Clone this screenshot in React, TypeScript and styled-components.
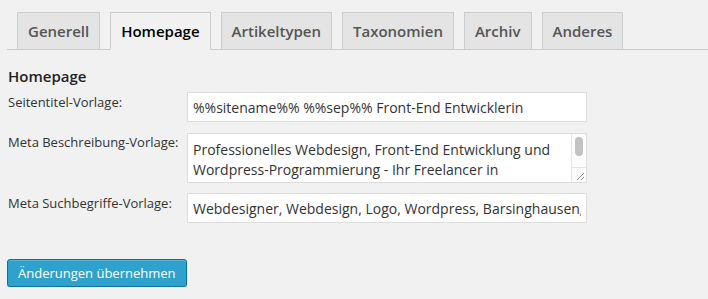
import styled, {createGlobalStyle} from "styled-components";

const GlobalStyle = createGlobalStyle`
    body {
        margin: 0;
        background: #f1f1f1;
        font-family: "Open Sans", "Liberation Sans", sans-serif;
        color: #444;
    }
`

const tabs = ["Generell", "Homepage", "Artikeltypen", "Taxonomien", "Archiv", "Anderes"]

const description = "Professionelles Webdesign, Front-End Entwicklung und Wordpress-Programmierung - Ihr Freelancer in Barsinghausen bei Hannover. Individuelle Webseiten, Logos und Wordpress-Themes."

export default function App() {
    return (
        <>
            <GlobalStyle/>
            <Page>
                <TabBar>
                    {tabs.map((t) => <Tab key={t} $active={t === "Homepage"}>{t}</Tab>)}
                </TabBar>
                <Heading>Homepage</Heading>
                <FormGrid>
                    <Label>Seitentitel-Vorlage:</Label>
                    <Input defaultValue="%%sitename%% %%sep%% Front-End Entwicklerin" spellCheck={false}/>
                    <Label>Meta Beschreibung-Vorlage:</Label>
                    <TextAreaWrap>
                        <TextArea defaultValue={description} spellCheck={false}/>
                        <ScrollTrack>
                            <ScrollThumb/>
                            <ResizeCorner>
                                <svg width="15" height="15" viewBox="0 0 15 15">
                                    <path d="M13 6 L6 13 M13 10 L10 13" stroke="#888" strokeWidth="1"/>
                                </svg>
                            </ResizeCorner>
                        </ScrollTrack>
                    </TextAreaWrap>
                    <Label>Meta Suchbegriffe-Vorlage:</Label>
                    <Input
                        defaultValue="Webdesigner, Webdesign, Logo, Wordpress, Barsinghausen, Hannover"
                        spellCheck={false}
                    />
                </FormGrid>
                <SubmitButton>Änderungen übernehmen</SubmitButton>
            </Page>
        </>
    )
}

const Page = styled.div`
    padding-top: 12px;
`

const TabBar = styled.div`
    display: flex;
    gap: 10px;
    margin-left: 7px;
    padding-left: 10px;
    border-bottom: 1px solid #ccc;
`

const Tab = styled.div<{ $active?: boolean }>`
    padding: 6px 10px;
    margin-bottom: -1px;
    border: 1px solid #ccc;
    border-bottom: 1px solid ${({$active}) => $active ? "#f1f1f1" : "#ccc"};
    background: ${({$active}) => $active ? "#f1f1f1" : "#e4e4e4"};
    color: ${({$active}) => $active ? "#000" : "#555"};
    font-size: 15px;
    font-weight: 600;
    line-height: 24px;
`

const Heading = styled.h3`
    margin: 16px 0 0 8px;
    font-size: 15px;
    font-weight: 600;
    line-height: 21px;
    color: #222;
`

const FormGrid = styled.div`
    display: grid;
    grid-template-columns: 179px 400px;
    row-gap: 10px;
    margin: 5px 0 0 8px;
    align-items: start;
`

const Label = styled.label`
    padding-top: 1px;
    font-size: 13px;
    line-height: 18px;
    color: #333;
`

const Input = styled.input`
    box-sizing: border-box;
    width: 400px;
    height: 30px;
    padding: 0 5px;
    border: 1px solid #ddd;
    background: #fff;
    font-family: inherit;
    font-size: 14px;
    color: #333;
    outline: none;
`

const TextAreaWrap = styled.div`
    position: relative;
    width: 400px;
    height: 50px;
    margin-top: 1px;
`

const TextArea = styled.textarea`
    display: block;
    box-sizing: border-box;
    width: 100%;
    height: 100%;
    padding: 6px 20px 6px 5px;
    border: 1px solid #ddd;
    background: #fff;
    font-family: inherit;
    font-size: 14px;
    line-height: 19.5px;
    color: #333;
    outline: none;
    resize: none;
    overflow: hidden;
`

const ScrollTrack = styled.div`
    position: absolute;
    top: 1px;
    right: 1px;
    bottom: 1px;
    width: 15px;
    box-sizing: border-box;
    border-left: 1px solid #e4e4e4;
    background: #fcfcfc;
    display: flex;
    flex-direction: column;
`

const ScrollThumb = styled.div`
    width: 8px;
    height: 19px;
    margin: 3px 0 0 3px;
    border-radius: 4px;
    background: #c2c2c2;
`

const ResizeCorner = styled.div`
    margin-top: auto;
    height: 15px;
    border-top: 1px solid #e4e4e4;
    box-sizing: border-box;
    line-height: 0;

    svg {
        margin-left: -1px;
        margin-top: -1px;
    }
`

const SubmitButton = styled.button`
    display: block;
    margin: 36px 0 0 7px;
    height: 28px;
    padding: 0 10px 1px;
    border: 1px solid #0074a2;
    border-radius: 3px;
    background: #2ea2cc;
    box-shadow: inset 0 1px 0 rgba(120, 200, 230, 0.5), 0 1px 0 rgba(0, 0, 0, 0.15);
    color: #fff;
    font-family: inherit;
    font-size: 13px;
    line-height: 26px;
    cursor: pointer;
`
